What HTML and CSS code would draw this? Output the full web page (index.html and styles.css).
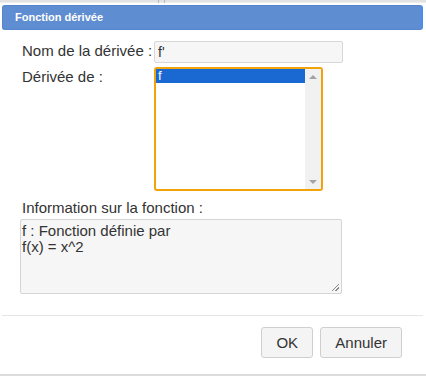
FILE: index.html
```html
<!DOCTYPE html>
<html lang="fr">
<head>
    <meta charset="UTF-8">
    <title>Fonction dérivée</title>
    <link rel="stylesheet" href="styles.css">
</head>
<body>
    <div class="topstrip"><span class="grip"></span></div>

    <div class="dialog">
        <div class="titlebar">Fonction dérivée</div>

        <div class="content">
            <div class="row">
                <label class="lbl" for="nom">Nom de la dérivée :</label>
                <input type="text" id="nom" class="field" value="f'">
            </div>

            <div class="row">
                <span class="lbl">Dérivée de :</span>
                <div class="listbox">
                    <div class="options">
                        <div class="option selected">f</div>
                    </div>
                    <div class="scrollbar">
                        <span class="arrow up"></span>
                        <span class="arrow down"></span>
                    </div>
                </div>
            </div>

            <div class="info-label">Information sur la fonction :</div>
            <div class="info">f : Fonction définie par<br>f(x) = x^2<span class="resize"></span></div>
        </div>

        <div class="footer">
            <button class="btn ok">OK</button>
            <button class="btn">Annuler</button>
        </div>
    </div>
    <div class="bottomline"></div>
</body>
</html>
```

FILE: styles.css
```css
* {
    margin: 0;
    padding: 0;
    box-sizing: border-box;
}

body {
    font-family: "Liberation Sans", Arial, sans-serif;
    background: #ffffff;
    color: #333333;
    width: 426px;
    height: 377px;
    overflow: hidden;
    display: flex;
    flex-direction: column;
}

.topstrip {
    height: 3px;
    background: #e2e2e2;
    border-bottom: 1px solid #ededed;
    position: relative;
}

.grip {
    position: absolute;
    left: 158px;
    top: 0;
    width: 7px;
    height: 3px;
    border-left: 1px solid #b8b8b8;
    border-right: 1px solid #b8b8b8;
}

.dialog {
    flex: 1;
    display: flex;
    flex-direction: column;
}

.titlebar {
    margin: 2px 3px 0 2px;
    height: 25px;
    background: #5f8dd1;
    border: 1px solid #5585cc;
    border-right: 2px solid #4a8cf0;
    border-radius: 3px;
    color: #ffffff;
    font-weight: bold;
    font-size: 11px;
    line-height: 23px;
    padding-left: 12px;
}

.content {
    padding: 11px 0 0 22px;
    height: 285px;
}

.row {
    display: flex;
    align-items: flex-start;
}

.lbl {
    width: 132px;
    font-size: 15px;
    line-height: 20px;
    color: #333333;
}

.row + .row {
    margin-top: 4px;
}

.field {
    width: 189px;
    height: 22px;
    background: #f6f6f6;
    border: 1px solid #d8d8d8;
    border-radius: 2px;
    font-family: inherit;
    font-size: 14px;
    color: #333333;
    padding: 0 3px;
    outline: none;
}

.listbox {
    width: 169px;
    height: 124px;
    border: 2px solid #f0a30a;
    border-radius: 3px;
    display: flex;
    background: #ffffff;
}

.options {
    flex: 1;
}

.option {
    font-size: 13px;
    line-height: 14px;
    padding-left: 2px;
}

.option.selected {
    background: #1a68d2;
    color: #ffffff;
}

.scrollbar {
    width: 16px;
    background: #f1f1f1;
    display: flex;
    flex-direction: column;
    justify-content: space-between;
    align-items: center;
    padding: 6px 0 5px;
}

.arrow {
    width: 0;
    height: 0;
    border-left: 4px solid transparent;
    border-right: 4px solid transparent;
}

.arrow.up {
    border-bottom: 4px solid #a3a3a3;
}

.arrow.down {
    border-top: 4px solid #a3a3a3;
}

.info-label {
    margin-top: 8px;
    font-size: 15px;
    line-height: 18px;
}

.info {
    position: relative;
    margin: 2px 0 0 -2px;
    width: 322px;
    height: 75px;
    background: #f6f6f6;
    border: 1px solid #d5d5d5;
    border-radius: 2px;
    font-size: 15px;
    line-height: 16px;
    padding: 3px 0 0 1px;
    color: #333333;
}

.resize {
    position: absolute;
    right: 2px;
    bottom: 2px;
    width: 7px;
    height: 7px;
    background: linear-gradient(135deg, transparent 45%, #888 45%, #888 55%, transparent 55%, transparent 70%, #888 70%, #888 80%, transparent 80%);
}

.footer {
    margin: 0 3px 0 2px;
    border-top: 1px solid #e5e5e5;
    display: flex;
    justify-content: flex-end;
    gap: 7px;
    padding: 11px 21px 0 0;
    height: 59px;
}

.btn {
    height: 31px;
    background: #f4f4f4;
    border: 1px solid #cfcfcf;
    border-radius: 3px;
    font-family: inherit;
    font-size: 15px;
    color: #333333;
    padding: 0 14px;
}

.btn.ok {
    width: 52px;
    padding: 0;
}

.bottomline {
    height: 2px;
    background: #dcdcdc;
    margin-bottom: 1px;
}
```
